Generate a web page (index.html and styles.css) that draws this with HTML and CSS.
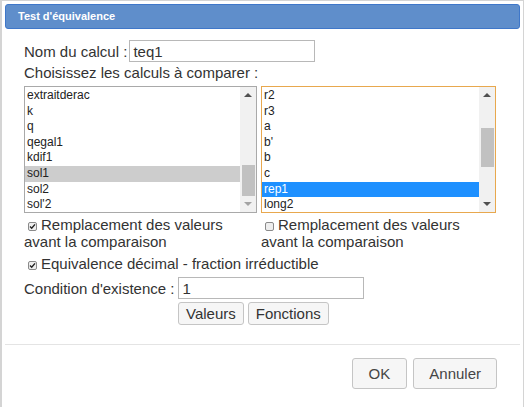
FILE: index.html
```html
<!DOCTYPE html>
<html lang="fr">
<head>
    <meta charset="UTF-8">
    <meta name="viewport" content="width=device-width, initial-scale=1.0">
    <title>Test d'équivalence</title>
    <link rel="stylesheet" href="styles.css">
</head>
<body>

    <div class="dialog">
        <div class="titlebar">Test d'équivalence</div>

        <div class="content">
            <div class="row">
                <label>Nom du calcul :</label>
                <input type="text" class="field" id="nom_calcul" value="teq1">
            </div>

            <div class="line">Choisissez les calculs à comparer :</div>

            <div class="lists">
                <div class="listbox list-left">
                    <ul class="items">
                        <li>extraitderac</li>
                        <li>k</li>
                        <li>q</li>
                        <li>qegal1</li>
                        <li>kdif1</li>
                        <li class="picked">sol1</li>
                        <li>sol2</li>
                        <li>sol'2</li>
                    </ul>
                    <div class="scrollbar">
                        <div class="arrow"><span class="tri-up"></span></div>
                        <div class="track"><div class="thumb thumb-end"></div></div>
                        <div class="arrow"><span class="tri-down off"></span></div>
                    </div>
                </div>

                <div class="listbox list-right">
                    <ul class="items">
                        <li>r2</li>
                        <li>r3</li>
                        <li>a</li>
                        <li>b'</li>
                        <li>b</li>
                        <li>c</li>
                        <li class="active">rep1</li>
                        <li>long2</li>
                    </ul>
                    <div class="scrollbar">
                        <div class="arrow"><span class="tri-up"></span></div>
                        <div class="track"><div class="thumb thumb-mid"></div></div>
                        <div class="arrow"><span class="tri-down"></span></div>
                    </div>
                </div>
            </div>

            <div class="options">
                <div class="option col-left">
                    <svg class="check" width="9" height="9" viewBox="0 0 9 9">
                        <rect x="0.5" y="0.5" width="8" height="8" rx="1.5" fill="#eeeeee" stroke="#8a8a8a"/>
                        <path d="M2 4.6 L3.7 6.3 L7 2.4" fill="none" stroke="#222" stroke-width="1.4"/>
                    </svg>Remplacement des valeurs<br>avant la comparaison
                </div>
                <div class="option col-right">
                    <svg class="check" width="9" height="9" viewBox="0 0 9 9">
                        <rect x="0.5" y="0.5" width="8" height="8" rx="1.5" fill="#eeeeee" stroke="#8a8a8a"/>
                    </svg>Remplacement des valeurs<br>avant la comparaison
                </div>
            </div>

            <div class="option single">
                <svg class="check" width="9" height="9" viewBox="0 0 9 9">
                    <rect x="0.5" y="0.5" width="8" height="8" rx="1.5" fill="#eeeeee" stroke="#8a8a8a"/>
                    <path d="M2 4.6 L3.7 6.3 L7 2.4" fill="none" stroke="#222" stroke-width="1.4"/>
                </svg>Equivalence décimal - fraction irréductible
            </div>

            <div class="row condition">
                <label>Condition d'existence :</label>
                <input type="text" class="field" id="condition" value="1">
            </div>

            <div class="actions">
                <button type="button" class="btn">Valeurs</button>
                <button type="button" class="btn">Fonctions</button>
            </div>
        </div>

        <div class="buttonpane">
            <button type="button" class="dlg-btn">OK</button>
            <button type="button" class="dlg-btn">Annuler</button>
        </div>
    </div>

</body>
</html>
```

FILE: styles.css
```css
body {
    margin: 0;
    font-family: "Liberation Sans", Arial, sans-serif;
    background: #fff;
}
.dialog {
    width: 524px;
    height: 420px;
    box-sizing: border-box;
    border: 1px solid #d4d4d4;
    border-left-width: 2px;
    padding: 3px 3px 0 3px;
}
.titlebar {
    height: 25px;
    box-sizing: border-box;
    background: #5f8ecb;
    border: 1px solid #3f77c9;
    border-radius: 3px;
    padding-left: 12px;
    color: #fff;
    font-size: 11px;
    font-weight: bold;
    line-height: 23px;
}
.content {
    padding: 11px 0 0 19px;
    color: #333;
}
.row {
    display: flex;
    align-items: center;
    height: 22px;
    font-size: 15px;
}
.field {
    width: 186px;
    height: 22px;
    box-sizing: border-box;
    margin: 0 0 0 2px;
    padding: 0 3px;
    border: 1px solid #b8b8b8;
    font-family: inherit;
    font-size: 15px;
    color: #333;
    outline: none;
}
.condition {
    margin-top: 2px;
}
.condition .field {
    margin-left: 4px;
}
.line {
    font-size: 15px;
    line-height: 22px;
}
.lists {
    display: flex;
    gap: 4px;
    margin-top: 2px;
}
.listbox {
    display: flex;
    height: 127px;
    box-sizing: border-box;
    border: 1px solid #a9a9a9;
    background: #fff;
}
.list-left {
    width: 233px;
}
.list-right {
    width: 235px;
    border-color: #e8a84e;
}
.items {
    flex: 1;
    list-style: none;
    margin: 0;
    padding: 1px 0 0;
    overflow: hidden;
    font-size: 12px;
    color: #222;
}
.items li {
    height: 15.6px;
    line-height: 15.6px;
    padding-left: 2px;
}
.items .picked {
    background: #cdcdcd;
}
.items .active {
    background: #1e90ff;
    color: #fff;
}
.scrollbar {
    width: 16px;
    display: flex;
    flex-direction: column;
    background: #f1f1f1;
}
.arrow {
    height: 16px;
    display: flex;
    align-items: center;
    justify-content: center;
}
.tri-up, .tri-down {
    width: 0;
    height: 0;
    border-left: 4px solid transparent;
    border-right: 4px solid transparent;
}
.tri-up {
    border-bottom: 4px solid #505050;
}
.tri-down {
    border-top: 4px solid #505050;
}
.tri-down.off {
    border-top-color: #a3a3a3;
}
.track {
    flex: 1;
    display: flex;
    flex-direction: column;
}
.thumb {
    margin: 0 1px 0 2px;
    background: #c1c1c1;
}
.thumb-end {
    height: 31px;
    margin-top: auto;
}
.thumb-mid {
    height: 39px;
    margin-top: 25px;
}
.options {
    display: flex;
    gap: 4px;
    margin-top: 3px;
}
.option {
    font-size: 15px;
    line-height: 17px;
}
.col-left {
    width: 233px;
}
.col-right {
    width: 235px;
}
.check {
    margin: 0 4px 0 4px;
    vertical-align: -0.5px;
}
.single {
    margin-top: 3px;
    line-height: 22px;
}
.actions {
    display: flex;
    gap: 4px;
    margin-top: 3px;
    padding-left: 154px;
}
.btn {
    height: 23px;
    padding: 0 7px;
    border: 1px solid #c5c5c5;
    border-radius: 3px;
    background: #f6f6f6;
    font-family: inherit;
    font-size: 15px;
    color: #333;
}
.buttonpane {
    display: flex;
    justify-content: flex-end;
    gap: 6px;
    margin-top: 19px;
    padding: 13px 23px 0 0;
    border-top: 1px solid #e4e4e4;
}
.dlg-btn {
    padding: 6px 15px;
    border: 1px solid #c5c5c5;
    border-radius: 3px;
    background: #f6f6f6;
    font-family: inherit;
    font-size: 15px;
    line-height: 17px;
    color: #454545;
}
.dlg-btn:first-child {
    padding: 6px 16px;
}
```
